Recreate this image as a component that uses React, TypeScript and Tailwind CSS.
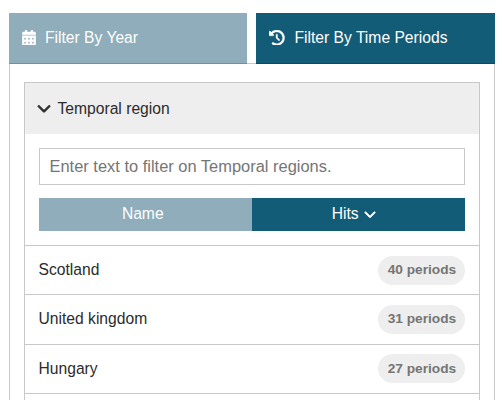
import { FaCalendarDays, FaChevronDown, FaClockRotateLeft } from "react-icons/fa6";

const regions = [
  { name: "Scotland", periods: 40 },
  { name: "United kingdom", periods: 31 },
  { name: "Hungary", periods: 27 },
];

export default function App() {
  return (
    <div className="h-[400px] overflow-hidden bg-white pl-[8.5px] pr-[8.6px] pt-[13px] font-['Liberation_Sans',Arial,sans-serif] text-[15.65px] leading-5 text-[#2b2b2b]">
      <div className="flex h-[51px] gap-[9px] border-b border-[#c8c8c8]">
        <button className="-mb-px flex w-[238.9px] items-center border-b border-[#6f929f] bg-[#8fadba] pl-[13px] text-white">
          <FaCalendarDays className="mr-[9.5px] mb-px h-[15.6px] w-[14px] stroke-white stroke-[14]" />
          Filter By Year
        </button>
        <button className="-mb-px flex flex-1 items-center border-b border-[#0b4a62] bg-[#135c77] pl-[13px] text-white">
          <FaClockRotateLeft className="mr-[9.5px] mb-px size-[15.6px] stroke-white stroke-[12]" />
          Filter By Time Periods
        </button>
      </div>
      <div className="h-[400px] border-x border-[#c8c8c8] px-[14px] pt-[18px]">
        <div className="border border-[#c8c8c8]">
          <div className="flex h-[51px] items-center bg-[#eeeeee] pl-3">
            <FaChevronDown className="mr-[7px] mb-px size-[14px] stroke-[#2b2b2b] stroke-[30]" />
            Temporal region
          </div>
          <div className="px-[14px] pt-[14px]">
            <input
              className="block h-[36.5px] w-full border border-[#c8c8c8] px-2.5 text-[16.45px] outline-none placeholder:text-[#757575]"
              placeholder="Enter text to filter on Temporal regions."
            />
            <div className="mt-[13.5px] mb-[14px] flex h-[33px] text-white">
              <button className="w-[213.5px] bg-[#8fadba] pr-[5px] pb-px">Name</button>
              <button className="flex flex-1 items-center justify-center bg-[#135c77] pr-[10px] pb-px">
                Hits
                <FaChevronDown className="ml-[5px] size-[12px] stroke-white stroke-[30]" />
              </button>
            </div>
          </div>
          {regions.map((region) => (
            <div
              key={region.name}
              className="flex h-[49.3px] items-center justify-between border-t border-[#c8c8c8] px-[14px]"
            >
              <span>{region.name}</span>
              <span className="flex h-[29px] w-[87px] items-center justify-center rounded-full bg-[#eeeeee] text-[13.7px] font-bold text-[#757575]">
                {region.periods} periods
              </span>
            </div>
          ))}
          <div className="h-12 border-t border-[#c8c8c8]" />
        </div>
      </div>
    </div>
  );
}
